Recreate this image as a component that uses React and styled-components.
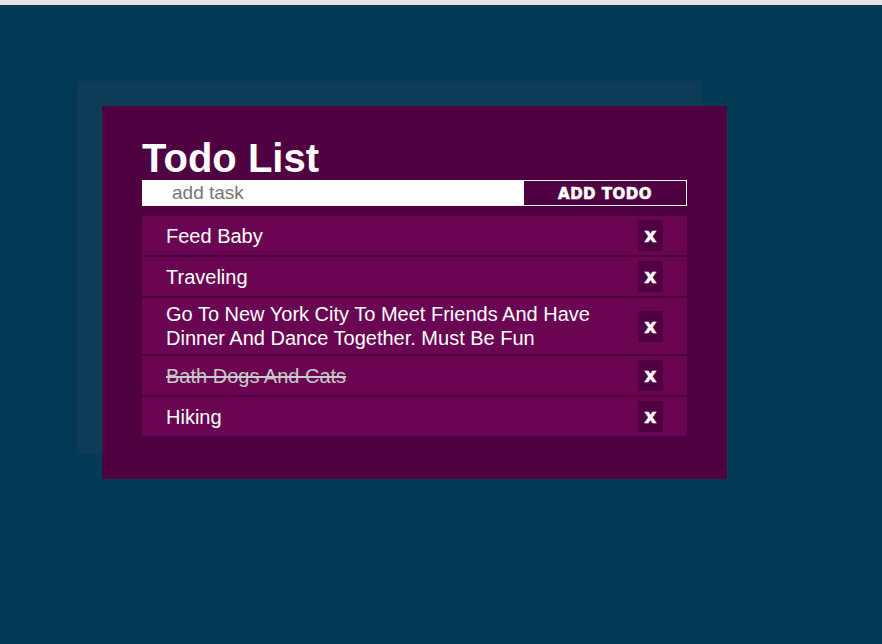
import React from "react";
import styled, { createGlobalStyle } from "styled-components";

const GlobalStyle = createGlobalStyle`
html, body {
  margin:0;
  padding:0;
  background-color:#033a56;
  font-family:"Liberation Sans", Arial, sans-serif;
}
`;

const todos = [
    { id: 1, text: "Feed Baby", done: false },
    { id: 2, text: "Traveling", done: false },
    { id: 3, text: "Go To New York City To Meet Friends And Have Dinner And Dance Together. Must Be Fun", done: false },
    { id: 4, text: "Bath Dogs And Cats", done: true },
    { id: 5, text: "Hiking", done: false },
];

const App = () => {
    return (
        <Page>
            <GlobalStyle />
            <TopStrip />
            <Stage>
                <Card>
                    <Title>Todo List</Title>
                    <Form onSubmit={(e) => e.preventDefault()}>
                        <TaskInput type="text" placeholder="add task" />
                        <AddButton type="submit">ADD TODO</AddButton>
                    </Form>
                    <List>
                        {todos.map((todo) => (
                            <Item key={todo.id}>
                                <ItemText done={todo.done ? 1 : 0}>{todo.text}</ItemText>
                                <DeleteButton>x</DeleteButton>
                            </Item>
                        ))}
                    </List>
                </Card>
            </Stage>
        </Page>
    );
};

const Page = styled.div`
min-height:644px;
background-color:#033a56;
`

const TopStrip = styled.div`
height:5px;
background-color:#e4e4e4;
`

const Stage = styled.div`
padding:101px 0 0 102px;
`

const Card = styled.div`
width:545px;
padding:30px 40px 43px;
background-color:#4f0041;
box-shadow:-25px -25px 0 #0e3e57;
`

const Title = styled.h1`
margin:0;
font-size:40px;
line-height:44px;
font-weight:bold;
color:#fff;
`

const Form = styled.form`
display:flex;
height:26px;
`

const TaskInput = styled.input`
flex:1;
min-width:0;
border:none;
outline:none;
margin:0;
padding:0 0 0 30px;
font-family:"Liberation Sans", Arial, sans-serif;
font-size:19px;
background-color:#fff;
&::placeholder {
  color:#757575;
}
`

const AddButton = styled.button`
width:164px;
margin:0;
padding:1px 0 0;
border:1px solid #fff;
background-color:#4f0041;
color:#fff;
font-family:"DejaVu Sans", sans-serif;
font-weight:bold;
font-size:15px;
letter-spacing:0.5px;
-webkit-text-stroke:0.6px #fff;
cursor:pointer;
`

const List = styled.ul`
list-style:none;
margin:10px 0 0;
padding:0;
display:flex;
flex-direction:column;
gap:2px;
`

const Item = styled.li`
display:flex;
align-items:center;
min-height:39px;
padding:4px 24px;
box-sizing:border-box;
background-color:#690552;
`

const ItemText = styled.span`
flex:1;
font-size:20px;
line-height:24px;
color:${(p) => (p.done ? "#c9c9c9" : "#fff")};
text-decoration:${(p) => (p.done ? "line-through" : "none")};
`

const DeleteButton = styled.button`
width:25px;
height:31px;
margin-left:10px;
padding:0;
border:none;
background-color:#4f0041;
color:#fff;
font-family:"DejaVu Sans", sans-serif;
font-weight:bold;
font-size:19px;
line-height:1;
-webkit-text-stroke:0.4px #fff;
cursor:pointer;
`

export default App;
